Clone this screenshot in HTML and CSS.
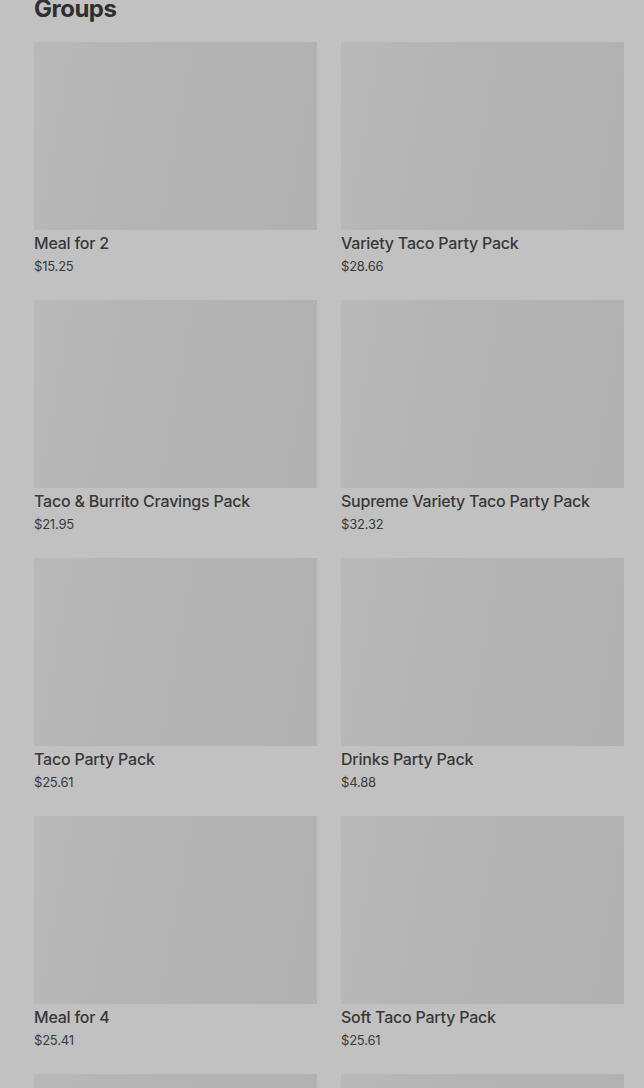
FILE: index.html
```html
<!DOCTYPE html>
<html>
<head>
<meta charset="utf-8">
<link rel="stylesheet" href="styles.css">
</head>
<body>
<main class="page">
  <h2 class="heading">Groups</h2>
  <div class="grid">
    <div class="card"><div class="thumb"></div><div class="title">Meal for 2</div><div class="price">$15.25</div></div>
    <div class="card"><div class="thumb"></div><div class="title">Variety Taco Party Pack</div><div class="price">$28.66</div></div>
    <div class="card"><div class="thumb"></div><div class="title">Taco &amp; Burrito Cravings Pack</div><div class="price">$21.95</div></div>
    <div class="card"><div class="thumb"></div><div class="title">Supreme Variety Taco Party Pack</div><div class="price">$32.32</div></div>
    <div class="card"><div class="thumb"></div><div class="title">Taco Party Pack</div><div class="price">$25.61</div></div>
    <div class="card"><div class="thumb"></div><div class="title">Drinks Party Pack</div><div class="price">$4.88</div></div>
    <div class="card"><div class="thumb"></div><div class="title">Meal for 4</div><div class="price">$25.41</div></div>
    <div class="card"><div class="thumb"></div><div class="title">Soft Taco Party Pack</div><div class="price">$25.61</div></div>
    <div class="card"><div class="thumb"></div></div>
    <div class="card"><div class="thumb"></div></div>
  </div>
</main>
</body>
</html>
```
FILE: styles.css
```css
html, body {
  margin: 0;
  padding: 0;
  background: #c1c1c1;
  overflow: hidden;
}
.page {
  padding: 0 20px 0 34px;
  font-family: Inter, "Noto Sans", sans-serif;
  color: #363636;
}
.heading {
  margin: -3px 0 21px 0;
  font-size: 24px;
  line-height: 24px;
  font-weight: 700;
  color: #2e2e2e;
  letter-spacing: -0.5px;
}
.grid {
  display: grid;
  grid-template-columns: 283px 283px;
  column-gap: 24px;
  row-gap: 24px;
}
.card {
  display: flex;
  flex-direction: column;
}
.thumb {
  height: 188px;
  background: linear-gradient(100deg, #b9b9b9 0%, #b4b4b4 40%, #b1b1b1 100%);
}
.title {
  font-size: 16px;
  line-height: 26px;
  font-weight: 500;
  color: #383838;
  letter-spacing: -0.22px;
}
.price {
  font-size: 13px;
  line-height: 20px;
  font-weight: 400;
  color: #3a3a3a;
  letter-spacing: -0.2px;
}
```
